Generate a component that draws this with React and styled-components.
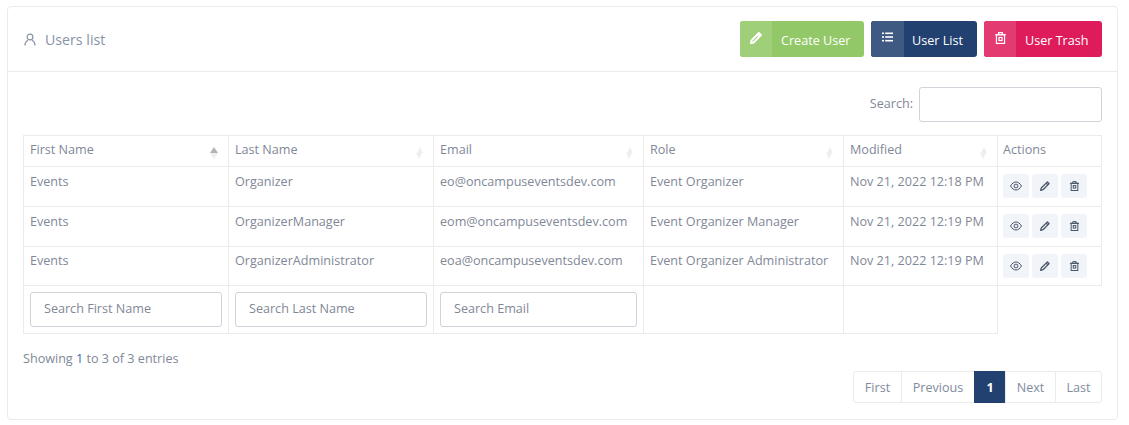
import styled, { createGlobalStyle } from 'styled-components';

const users = [
  { first: 'Events', last: 'Organizer', email: 'eo@oncampuseventsdev.com', role: 'Event Organizer', modified: 'Nov 21, 2022 12:18 PM' },
  { first: 'Events', last: 'OrganizerManager', email: 'eom@oncampuseventsdev.com', role: 'Event Organizer Manager', modified: 'Nov 21, 2022 12:19 PM' },
  { first: 'Events', last: 'OrganizerAdministrator', email: 'eoa@oncampuseventsdev.com', role: 'Event Organizer Administrator', modified: 'Nov 21, 2022 12:19 PM' },
];

const columns = [
  { label: 'First Name', width: 205, sorted: true },
  { label: 'Last Name', width: 205 },
  { label: 'Email', width: 210 },
  { label: 'Role', width: 200 },
  { label: 'Modified', width: 154 },
  { label: 'Actions', width: 104, plain: true },
];

const UserIcon = () => (
  <svg width="12" height="13" viewBox="0 0 12 13" fill="none" stroke="currentColor" strokeWidth="1.2">
    <circle cx="6" cy="4" r="2.9" />
    <path d="M1 12.5c0-3 1.6-4.5 3-5.2M11 12.5c0-3-1.6-4.5-3-5.2" />
  </svg>
);

const PencilIcon = ({ size = 10, weight = 1.3 }) => (
  <svg width={size} height={size} viewBox="0 0 10 10" fill="none" stroke="currentColor" strokeWidth={weight} strokeLinejoin="round">
    <path d="M7.4 .9 9.1 2.6 3 8.7 .7 9.3 1.3 7Z" />
    <path d="M6.2 2.1 7.9 3.8" />
  </svg>
);

const ListIcon = () => (
  <svg width="11" height="10" viewBox="0 0 11 10" fill="currentColor">
    <rect x="0" y="0.5" width="2" height="1.6" />
    <rect x="3.2" y="0.5" width="7.8" height="1.6" />
    <rect x="0" y="4.2" width="2" height="1.6" />
    <rect x="3.2" y="4.2" width="7.8" height="1.6" />
    <rect x="0" y="7.9" width="2" height="1.6" />
    <rect x="3.2" y="7.9" width="7.8" height="1.6" />
  </svg>
);

const TrashIcon = ({ size = 10 }) => (
  <svg width={size} height={size + 1} viewBox="0 0 10 11" fill="none" stroke="currentColor" strokeWidth="1.1">
    <path d="M0 2.5H10M3.2 2.5V.6H6.8V2.5" />
    <rect x="1.3" y="2.5" width="7.4" height="8" />
    <rect x="3.6" y="5" width="2.8" height="2.8" />
  </svg>
);

const EyeIcon = () => (
  <svg width="12" height="10" viewBox="0 0 12 10" fill="none" stroke="currentColor" strokeWidth="1">
    <path d="M.6 5C2 2.3 3.9 1 6 1s4 1.3 5.4 4C10 7.7 8.1 9 6 9S2 7.7 .6 5Z" />
    <circle cx="6" cy="5" r="1.9" />
  </svg>
);

export default function App() {
  return (
    <>
      <GlobalStyle />
      <Card>
        <CardHeader>
          <Title><UserIcon /> Users list</Title>
          <Toolbar>
            <LabelButton $bg="#93c868" $iconBg="#a0cf79" $iconWidth={32} $textGap={9} $width={124}>
              <span><PencilIcon size={12} weight={1.7} /></span>Create User
            </LabelButton>
            <LabelButton $bg="#234170" $iconBg="#3f5a82" $iconWidth={33} $textGap={8} $width={106}>
              <span><ListIcon /></span>User List
            </LabelButton>
            <LabelButton $bg="#de1c5c" $iconBg="#e33a72" $iconWidth={32} $textGap={9} $width={118}>
              <span><TrashIcon size={11} /></span>User Trash
            </LabelButton>
          </Toolbar>
        </CardHeader>
        <CardBody>
          <SearchRow>
            <label htmlFor="search">Search:</label>
            <SearchInput id="search" />
          </SearchRow>
          <Table>
            <colgroup>
              {columns.map((c) => <col key={c.label} width={c.width} />)}
            </colgroup>
            <thead>
              <tr>
                {columns.map((c) => (
                  <Th key={c.label} $plain={c.plain}>
                    {c.label}
                    {!c.plain && <SortMark $active={c.sorted} />}
                  </Th>
                ))}
              </tr>
            </thead>
            <tbody>
              {users.map((u) => (
                <tr key={u.email}>
                  <Td>{u.first}</Td>
                  <Td>{u.last}</Td>
                  <Td>{u.email}</Td>
                  <Td>{u.role}</Td>
                  <Td>{u.modified}</Td>
                  <ActionsTd>
                    <Actions>
                      <ActionButton><EyeIcon /></ActionButton>
                      <ActionButton><PencilIcon /></ActionButton>
                      <ActionButton><TrashIcon size={9} /></ActionButton>
                    </Actions>
                  </ActionsTd>
                </tr>
              ))}
              <tr>
                <FilterTd><FilterInput placeholder="Search First Name" /></FilterTd>
                <FilterTd><FilterInput placeholder="Search Last Name" /></FilterTd>
                <FilterTd><FilterInput placeholder="Search Email" /></FilterTd>
                <FilterTd />
                <FilterTd />
              </tr>
            </tbody>
          </Table>
          <Info>Showing <b>1</b> to 3 of 3 entries</Info>
          <Pager>
            <PageLink $width={49}>First</PageLink>
            <PageLink $width={74}>Previous</PageLink>
            <PageLink $width={32} $active>1</PageLink>
            <PageLink $width={51}>Next</PageLink>
            <PageLink $width={47}>Last</PageLink>
          </Pager>
        </CardBody>
      </Card>
    </>
  );
}

const GlobalStyle = createGlobalStyle`
  body {
    margin: 0;
    background: #fff;
    font-family: 'Open Sans', sans-serif;
    font-size: 12.6px;
    color: #7f8897;
  }
  input::placeholder {
    color: #7f8897;
    opacity: 1;
  }
`;

const Card = styled.div`
  box-sizing: border-box;
  width: 1111px;
  height: 414px;
  margin: 6px 0 0 7px;
  border: 1px solid #ebebeb;
  border-radius: 4px;
  background: #fff;
`;

const CardHeader = styled.div`
  box-sizing: border-box;
  height: 65px;
  display: flex;
  align-items: center;
  justify-content: space-between;
  padding: 0 15px;
  border-bottom: 1px solid #ebebeb;
`;

const Title = styled.h3`
  margin: 0;
  display: flex;
  align-items: center;
  gap: 10px;
  font-size: 14.2px;
  font-weight: 400;
  color: #8793a6;

  svg {
    margin-left: 1px;
    margin-right: -1px;
  }
`;

const Toolbar = styled.div`
  display: flex;
  gap: 7px;
`;

const LabelButton = styled.button`
  box-sizing: border-box;
  width: ${(p) => p.$width}px;
  height: 36px;
  display: flex;
  align-items: center;
  padding: 2px 0 0;
  border: 0;
  border-radius: 3px;
  overflow: hidden;
  background: ${(p) => p.$bg};
  color: #fff;
  font-family: inherit;
  font-size: 12.6px;

  span {
    align-self: stretch;
    width: ${(p) => p.$iconWidth}px;
    margin: -2px ${(p) => p.$textGap}px 0 0;
    display: flex;
    align-items: flex-start;
    justify-content: center;
    padding-top: 11px;
    box-sizing: border-box;
    background: ${(p) => p.$iconBg};
  }
`;

const CardBody = styled.div`
  padding: 15px 15px 0;
`;

const SearchRow = styled.div`
  display: flex;
  align-items: center;
  justify-content: flex-end;
  gap: 6px;
  height: 35px;
  margin-bottom: 13px;

  label {
    margin-top: -2px;
  }
`;

const SearchInput = styled.input`
  box-sizing: border-box;
  width: 183px;
  height: 35px;
  border: 1px solid #ced4da;
  border-radius: 3px;
  background: #fff;
`;

const Table = styled.table`
  table-layout: fixed;
  width: 1078px;
  border-collapse: collapse;
`;

const Th = styled.th`
  position: relative;
  box-sizing: border-box;
  height: 31px;
  padding: 0 ${(p) => (p.$plain ? 5 : 6)}px 3px;
  border: 1px solid #ebebeb;
  text-align: left;
  font-weight: 400;
`;

/* small up/down sort arrows, darker and wider on the column in use */
const SortMark = styled.i`
  position: absolute;
  right: ${(p) => (p.$active ? 10 : 10.5)}px;
  top: 11px;
  width: 0;
  height: 0;
  border-left: ${(p) => (p.$active ? 4 : 3.5)}px solid transparent;
  border-right: ${(p) => (p.$active ? 4 : 3.5)}px solid transparent;
  border-bottom: 6px solid ${(p) => (p.$active ? '#b0b5bb' : '#eceef0')};

  &::after {
    content: '';
    display: block;
    position: absolute;
    left: ${(p) => (p.$active ? -4 : -3.5)}px;
    top: 6px;
    border-left: ${(p) => (p.$active ? 4 : 3.5)}px solid transparent;
    border-right: ${(p) => (p.$active ? 4 : 3.5)}px solid transparent;
    border-top: 6px solid #eceef0;
  }
`;

const Td = styled.td`
  box-sizing: border-box;
  height: 40px;
  padding: 6px 6px 0;
  border: 1px solid #ebebeb;
  vertical-align: top;

  tr:nth-child(3) > & {
    height: 39px;
    padding-top: 5px;
  }
`;

const ActionsTd = styled(Td)`
  padding: 7px 5px 0;

  tr:nth-child(3) > & {
    padding-top: 7px;
  }
`;

const FilterTd = styled.td`
  box-sizing: border-box;
  height: 48px;
  padding: 6px;
  border: 1px solid #ebebeb;
`;

const FilterInput = styled.input`
  box-sizing: border-box;
  display: block;
  width: 100%;
  height: 35px;
  padding: 0 13px 2px;
  border: 1px solid #ced4da;
  border-radius: 3px;
  font-family: inherit;
  font-size: 12.6px;
  color: #7f8897;
`;

const Actions = styled.div`
  display: flex;
  gap: 3px;
`;

const ActionButton = styled.button`
  box-sizing: border-box;
  width: 26px;
  height: 24px;
  display: flex;
  align-items: center;
  justify-content: center;
  padding: 0;
  border: 0;
  border-radius: 3px;
  background: #f1f5f9;
  color: #4a5468;
`;

const Info = styled.div`
  margin-top: 16px;
  height: 18px;
  line-height: 18px;

  b {
    font-weight: 400;
    color: #3f6cb0;
  }
`;

const Pager = styled.div`
  display: flex;
  justify-content: flex-end;
  margin-top: 3px;
`;

const PageLink = styled.a`
  box-sizing: border-box;
  width: ${(p) => p.$width}px;
  height: 32px;
  display: flex;
  align-items: center;
  justify-content: center;
  margin-left: -1px;
  border: 1px solid ${(p) => (p.$active ? '#234170' : '#ebebeb')};
  background: ${(p) => (p.$active ? '#234170' : '#fff')};
  color: ${(p) => (p.$active ? '#fff' : '#7f8b9e')};
  font-weight: ${(p) => (p.$active ? 700 : 400)};

  &:first-child {
    border-radius: 3px 0 0 3px;
  }
  &:last-child {
    border-radius: 0 3px 3px 0;
  }
`;
